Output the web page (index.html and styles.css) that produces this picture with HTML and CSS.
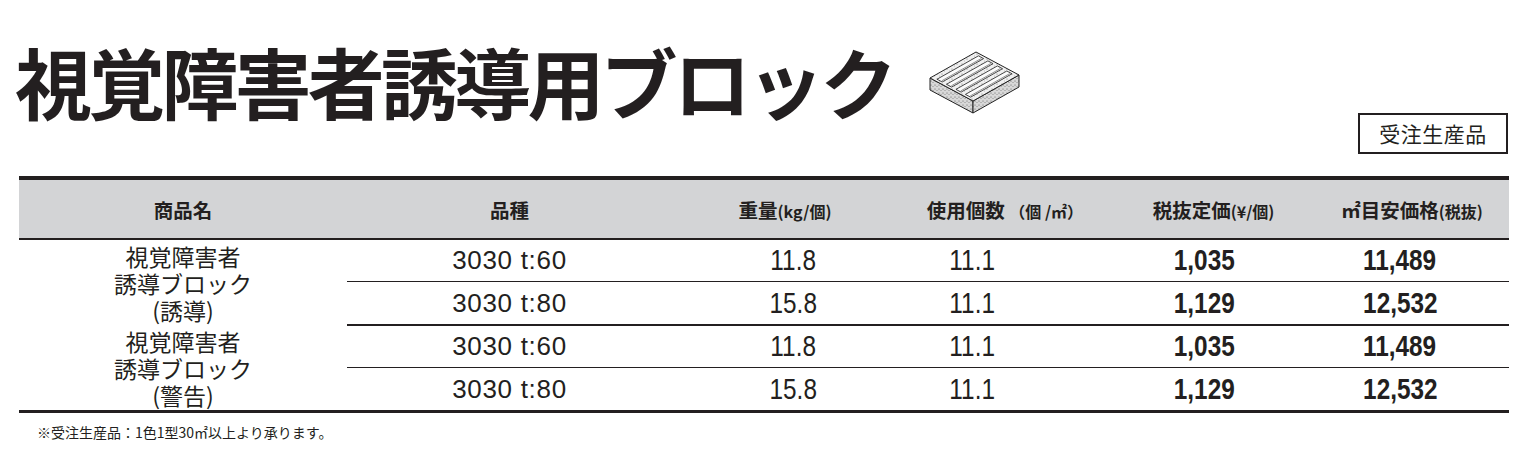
FILE: index.html
```html
<!DOCTYPE html>
<html lang="ja">
<head>
<meta charset="utf-8">
<title>視覚障害者誘導用ブロック</title>
<link rel="stylesheet" href="styles.css">
</head>
<body>
<div class="page">
  <header class="top">
    <h1 class="title">視覚障害者誘導用ブロック</h1>
    <svg class="tile" viewBox="0 0 96 66" width="96" height="66" aria-hidden="true">
      <defs>
        <pattern id="speck" width="5" height="5" patternUnits="userSpaceOnUse">
          <rect width="5" height="5" fill="#f0f0f0"/>
          <circle cx="1" cy="1" r="0.5" fill="#666"/>
          <circle cx="3.5" cy="3" r="0.45" fill="#888"/>
        </pattern>
        <pattern id="speck2" width="4" height="4" patternUnits="userSpaceOnUse">
          <rect width="4" height="4" fill="#d8d8d8"/>
          <circle cx="1" cy="1" r="0.55" fill="#555"/>
          <circle cx="3" cy="2.5" r="0.5" fill="#777"/>
        </pattern>
      </defs>
      <polygon points="4,30 47,53 47,65 4,42" fill="url(#speck2)" stroke="#222" stroke-width="1"/>
      <polygon points="47,53 93,27 93,39 47,65" fill="url(#speck2)" stroke="#222" stroke-width="1"/>
      <polygon points="4,30 50,4 93,27 47,53" fill="url(#speck)" stroke="#222" stroke-width="1"/>
      <g transform="matrix(46 -26 43 23 4 30)" fill="#fbfbfb" stroke="#333">
        <rect x="0.05" y="0.11" width="0.9" height="0.12" vector-effect="non-scaling-stroke" stroke-width="0.9"/>
        <rect x="0.05" y="0.33" width="0.9" height="0.12" vector-effect="non-scaling-stroke" stroke-width="0.9"/>
        <rect x="0.05" y="0.55" width="0.9" height="0.12" vector-effect="non-scaling-stroke" stroke-width="0.9"/>
        <rect x="0.05" y="0.77" width="0.9" height="0.12" vector-effect="non-scaling-stroke" stroke-width="0.9"/>
      </g>
      <g transform="matrix(46 -26 43 23 4 30)" fill="none" stroke="#777">
        <line x1="0.07" y1="0.20" x2="0.93" y2="0.20" vector-effect="non-scaling-stroke" stroke-width="0.8"/>
        <line x1="0.07" y1="0.42" x2="0.93" y2="0.42" vector-effect="non-scaling-stroke" stroke-width="0.8"/>
        <line x1="0.07" y1="0.64" x2="0.93" y2="0.64" vector-effect="non-scaling-stroke" stroke-width="0.8"/>
        <line x1="0.07" y1="0.86" x2="0.93" y2="0.86" vector-effect="non-scaling-stroke" stroke-width="0.8"/>
      </g>
    </svg>
    <div class="badge">受注生産品</div>
  </header>

  <table class="price">
    <colgroup>
      <col class="w1"><col class="w2"><col class="w3"><col class="w4"><col class="w5"><col class="w6">
    </colgroup>
    <thead>
      <tr>
        <th>商品名</th>
        <th>品種</th>
        <th>重量<span class="sm">(kg/個)</span></th>
        <th>使用個数 <span class="sm">（個 /㎡）</span></th>
        <th>税抜定価<span class="sm">(¥/個)</span></th>
        <th>㎡目安価格<span class="sm">(税抜)</span></th>
      </tr>
    </thead>
    <tbody>
      <tr class="first">
        <td class="name" rowspan="2"><span class="ln">視覚障害者</span><span class="ln">誘導ブロック</span><span class="ln">(誘導)</span></td>
        <td class="kind thin">3030 t:60</td>
        <td class="c3 thin"><span class="num">11.8</span></td>
        <td class="c4 thin"><span class="num">11.1</span></td>
        <td class="c5 thin"><span class="num b">1,035</span></td>
        <td class="c6 thin"><span class="num b">11,489</span></td>
      </tr>
      <tr class="last">
        <td class="kind">3030 t:80</td>
        <td class="c3"><span class="num">15.8</span></td>
        <td class="c4"><span class="num">11.1</span></td>
        <td class="c5"><span class="num b">1,129</span></td>
        <td class="c6"><span class="num b">12,532</span></td>
      </tr>
      <tr class="first">
        <td class="name" rowspan="2"><span class="ln">視覚障害者</span><span class="ln">誘導ブロック</span><span class="ln">(警告)</span></td>
        <td class="kind thin">3030 t:60</td>
        <td class="c3 thin"><span class="num">11.8</span></td>
        <td class="c4 thin"><span class="num">11.1</span></td>
        <td class="c5 thin"><span class="num b">1,035</span></td>
        <td class="c6 thin"><span class="num b">11,489</span></td>
      </tr>
      <tr class="last">
        <td class="kind">3030 t:80</td>
        <td class="c3"><span class="num">15.8</span></td>
        <td class="c4"><span class="num">11.1</span></td>
        <td class="c5"><span class="num b">1,129</span></td>
        <td class="c6"><span class="num b">12,532</span></td>
      </tr>
    </tbody>
  </table>

  <p class="note">※受注生産品：1色1型30㎡以上より承ります。</p>
</div>
</body>
</html>
```

FILE: styles.css
```css
html, body {
  margin: 0;
  padding: 0;
  background: #ffffff;
}

body {
  color: #231f20;
  font-family: "Noto Sans CJK JP", "Noto Sans", sans-serif;
}

.page {
  width: 1490px;
  padding: 0 21px 0 19px;
}

.top {
  display: flex;
  align-items: flex-start;
  height: 176px;
}

.title {
  margin: 42px 0 0 -4px;
  font-size: 77px;
  line-height: 1;
  font-weight: 700;
  letter-spacing: -3.8px;
  white-space: nowrap;
}

.tile {
  margin: 48px 0 0 33px;
  flex: none;
}

.badge {
  margin-left: auto;
  margin-right: 1px;
  align-self: flex-end;
  margin-bottom: 22px;
  width: 146px;
  height: 37px;
  border: 2px solid #231f20;
  font-size: 21px;
  line-height: 37px;
  text-align: center;
  letter-spacing: 0.5px;
}

.price {
  width: 1490px;
  border-collapse: collapse;
  table-layout: fixed;
  border-top: 4px solid #231f20;
  border-bottom: 3px solid #231f20;
}

.w1 { width: 328px; }
.w2 { width: 325px; }
.w3 { width: 226px; }
.w4 { width: 214px; }
.w5 { width: 203px; }
.w6 { width: 194px; }

.price th {
  background: #d3d4d6;
  height: 58px;
  padding: 0;
  font-size: 19.5px;
  font-weight: 700;
  text-align: center;
  vertical-align: middle;
  border-bottom: 2.5px solid #231f20;
  white-space: nowrap;
}

.price th .sm {
  font-size: 16px;
}

.price td {
  padding: 0;
  text-align: center;
  vertical-align: middle;
}

.price tr.first td {
  height: 41px;
}

.price tr.last td {
  height: 42px;
  border-bottom: 2.5px solid #231f20;
}

.price tbody tr:last-child td {
  border-bottom: 0;
}

.price td.thin {
  border-bottom: 1.5px solid #231f20;
}

.price td.name {
  font-size: 23px;
  font-weight: 400;
  padding-top: 1px;
}

.price td.name .ln {
  display: block;
  height: 27px;
  line-height: 27px;
  overflow: visible;
}

.price td.kind {
  font-family: "Liberation Sans", Arial, sans-serif;
  font-size: 26px;
  letter-spacing: 0.7px;
}

.num {
  display: inline-block;
  font-family: "Liberation Sans", Arial, sans-serif;
  font-size: 29px;
  transform: scaleX(0.84);
}

.num.b {
  font-weight: 700;
}

.c3 { padding-left: 16px !important; }
.c4 { padding-right: 66px !important; }
.c5 { padding-right: 18px !important; }
.c6 { padding-right: 24px !important; }

.note {
  margin: 9px 0 0 18px;
  font-size: 14px;
  line-height: 20px;
}
```
